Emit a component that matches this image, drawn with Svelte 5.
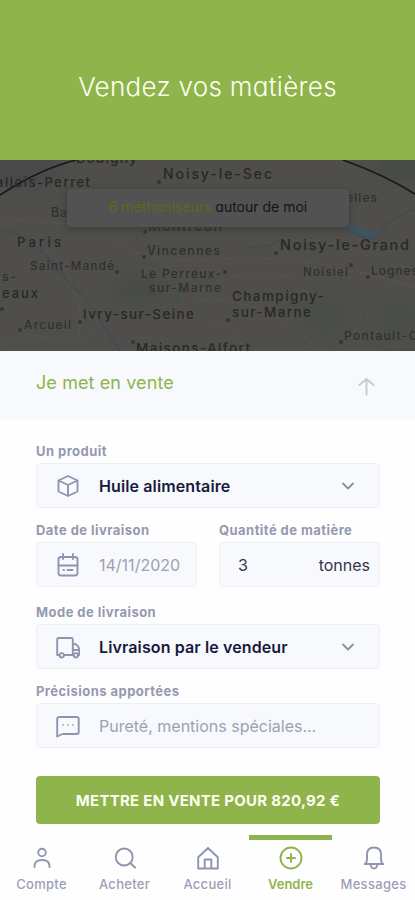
<script lang="ts">
  type Place = { name: string; x: number; y: number; width: number; size: number; strong?: boolean }

  const places: Place[] = [
    { name: 'Bobigny', x: 76, y: 163, width: 61, size: 14, strong: true },
    { name: 'allois-Perret', x: -4, y: 187, width: 94, size: 13, strong: true },
    { name: 'Noisy-le-Sec', x: 163, y: 179, width: 109, size: 14, strong: true },
    { name: 'Ba', x: 51, y: 217, width: 16, size: 12.5 },
    { name: 'elles', x: 346, y: 202, width: 31, size: 12 },
    { name: 'Montreuil', x: 148, y: 231, width: 74, size: 14, strong: true },
    { name: 'Paris', x: 17, y: 247, width: 44, size: 13, strong: true },
    { name: 'Vincennes', x: 147, y: 255, width: 73, size: 12.5 },
    { name: 'Noisy-le-Grand', x: 280, y: 250, width: 129, size: 14.5, strong: true },
    { name: 'Saint-Mandé', x: 30, y: 270, width: 84, size: 11.5 },
    { name: 'Le Perreux-', x: 141, y: 278, width: 80, size: 12 },
    { name: 'sur-Marne', x: 149, y: 292, width: 72, size: 12 },
    { name: 'Noisiel', x: 303, y: 276, width: 45, size: 11.5 },
    { name: 'Lognes', x: 371, y: 275, width: 47, size: 12 },
    { name: 's-', x: 2, y: 281, width: 14, size: 12.5 },
    { name: 'eaux', x: 2, y: 298, width: 36, size: 13, strong: true },
    { name: 'Champigny-', x: 232, y: 301, width: 92, size: 13.5, strong: true },
    { name: 'sur-Marne', x: 232, y: 317, width: 79, size: 13.5, strong: true },
    { name: 'Ivry-sur-Seine', x: 83, y: 319, width: 111, size: 13.5, strong: true },
    { name: 'Arcueil', x: 24, y: 329, width: 47, size: 12 },
    { name: 'Maisons-Alfort', x: 136, y: 353, width: 114, size: 13.5, strong: true },
    { name: 'Pontault-Co', x: 344, y: 340, width: 82, size: 12 },
  ]

  const towns = [
    [159, 182], [145, 232], [144, 257], [276, 253], [117, 272], [225, 272],
    [351, 265], [368, 277], [2, 309], [80, 322], [20, 330], [228, 320], [133, 342], [341, 342],
  ]

  const tabs = [
    { id: 'account', label: 'Compte' },
    { id: 'search', label: 'Acheter' },
    { id: 'home', label: 'Accueil' },
    { id: 'sell', label: 'Vendre' },
    { id: 'messages', label: 'Messages' },
  ]

  let active = $state('sell')
</script>

{#snippet chevron()}
  <svg class="chevron" viewBox="0 0 14 14"><path d="m2 4.500 5 5 5-5" /></svg>
{/snippet}

<div class="screen">
  <header>
    <h1>Vendez vos matières</h1>
  </header>

  <section class="map">
    <svg class="map-canvas" viewBox="0 160 415 191">
      <defs>
        <filter id="soft" x="-20%" y="-20%" width="140%" height="140%">
          <feGaussianBlur stdDeviation="7" />
        </filter>
      </defs>
      <rect y="160" width="415" height="191" fill="#4f4e4b" />
      <g filter="url(#soft)">
        <ellipse cx="138" cy="290" rx="28" ry="13" fill="#464b45" />
        <ellipse cx="400" cy="168" rx="26" ry="14" fill="#444b45" />
        <ellipse cx="325" cy="317" rx="25" ry="16" fill="#484d46" />
        <ellipse cx="398" cy="320" rx="20" ry="18" fill="#484d46" />
        <ellipse cx="25" cy="172" rx="40" ry="16" fill="#494a49" />
      </g>
      <g class="roads">
        <path d="M68 160q10 17 23 24M0 218q60 8 118 5M0 345q30-15 55-6t52-17M100 232q40 35 118 27t197 29M195 300q70-5 118 45M270 225q13 18 30 15t67 15" />
        <path d="M230 276q40 4 80-4t105 14M210 322q27-2 33 29M45 250q18 10 29 38t3 63" />
      </g>
      <g class="rivers">
        <path d="M0 228q30 9 45 27t31 34 20 23q10 20 24 39" />
        <path d="M180 302q-8-8 1-14M250 247q23 0 29-7M347 228q10 10 29 9 15-22 39-27" />
      </g>
      <path d="m348 224 28 8 1 6q-18-2-29-9z" fill="#3d555f" />
      <path class="radius" d="M0 195Q40 169 76 160M343 160q40 14 72 34" />
      {#each towns as [x, y]}
        <circle cx={x} cy={y} r="2" fill="#343432" />
      {/each}
      {#each places as place}
        <text
          class:strong={place.strong}
          x={place.x}
          y={place.y}
          font-size={place.size}
          textLength={place.width}>{place.name}</text
        >
      {/each}
    </svg>
    <p class="nearby"><span>6 méthaniseurs</span> autour de moi</p>
  </section>

  <section class="sheet-title">
    <h2>Je met en vente</h2>
    <svg class="up" viewBox="0 0 18 20"><path d="M9 18.500V2M1.500 8.500 9 2l7.500 6.500" /></svg>
  </section>

  <form>
    <div class="group">
      <span class="label">Un produit</span>
      <div class="field">
        <svg class="icon" viewBox="0 0 24 24">
          <path d="m12 2 9.500 4.500v11L12 22l-9.500-4.500v-11zM2.500 6.500 12 11l9.500-4.500M12 11v11" />
        </svg>
        <span class="value">Huile alimentaire</span>
        {@render chevron()}
      </div>
    </div>

    <div class="row">
      <div class="group">
        <span class="label">Date de livraison</span>
        <div class="field">
          <svg class="icon" viewBox="0 0 24 24">
            <rect x="2.500" y="4" width="19" height="18.500" rx="2.500" />
            <path d="M2.500 12.500h19M7 1v5M17 1v5M7.500 17h.5M11.500 17h5" />
          </svg>
          <span class="muted">14/11/2020</span>
        </div>
      </div>
      <div class="group">
        <span class="label">Quantité de matière</span>
        <div class="field amount">
          <span>3</span>
          <span>tonnes</span>
        </div>
      </div>
    </div>

    <div class="group">
      <span class="label">Mode de livraison</span>
      <div class="field">
        <svg class="icon" viewBox="0 0 24 24">
          <path d="M3.500 20H1.200V4.500q0-1.500 1.500-1.500h12.600q1.500 0 1.500 1.500V20H8M16.800 9h2.400q4 2 4 6v5h-1.500" />
          <path d="M16.800 15h6M17 20h1" />
          <circle cx="5.700" cy="20.300" r="2.200" />
          <circle cx="19.800" cy="20.300" r="2.200" />
        </svg>
        <span class="value">Livraison par le vendeur</span>
        {@render chevron()}
      </div>
    </div>

    <div class="group">
      <span class="label">Précisions apportées</span>
      <div class="field">
        <svg class="icon" viewBox="0 0 24 24">
          <path d="M1.200 22.500V5q0-2 2-2h17.500q2 0 2 2v13q0 2-2 2H6.500z" />
          <path class="dots" d="M7 11h.2M11.900 11h.2M16.800 11h.2" />
        </svg>
        <span class="muted">Pureté, mentions spéciales...</span>
      </div>
    </div>

    <button type="button" class="submit">METTRE EN VENTE POUR 820,92 €</button>
  </form>

  <nav>
    {#each tabs as tab}
      <button type="button" class="tab" class:active={active === tab.id} onclick={() => (active = tab.id)}>
        <svg viewBox="0 0 24 24">
          {#if tab.id === 'account'}
            <circle cx="12" cy="6.500" r="3.800" />
            <path d="M4.500 21v-1q0-6 7.500-6t7.500 6v1" />
          {:else if tab.id === 'search'}
            <circle cx="11.200" cy="11" r="8.500" />
            <path d="m17.300 17 4.700 4.500" />
          {:else if tab.id === 'home'}
            <path d="M2.200 22.500V11.200L12 2l9.800 9.200v11.300zM8.700 22.500v-9h6.600v9" />
          {:else if tab.id === 'sell'}
            <circle cx="12" cy="12" r="10.500" />
            <path d="M12 8v8M8 12h8" />
          {:else}
            <path d="M2.700 18q2.300-1 2.300-5V8.500q0-7 7-7t7 7V13q0 4 2.300 5zM8.500 18q.5 4.500 3.500 4.500t3.500-4.500" />
          {/if}
        </svg>
        <span>{tab.label}</span>
      </button>
    {/each}
  </nav>
</div>

<style>
  :global(body) {
    margin: 0;
    background: #fff;
  }

  .screen {
    display: flex;
    flex-direction: column;
    width: 415px;
    height: 900px;
    overflow: hidden;
    font-family: Inter, 'Liberation Sans', sans-serif;
    color: #171a3c;
    background: #fefeff;
  }

  h1,
  h2,
  p {
    margin: 0;
    font-weight: 400;
    /* single-storey a */
    font-feature-settings: 'cv11';
  }

  header {
    display: flex;
    flex: none;
    align-items: center;
    justify-content: center;
    box-sizing: border-box;
    height: 160px;
    padding-top: 13px;
    background: #8fb44b;
  }

  h1 {
    font-size: 26px;
    font-weight: 300;
    line-height: 34px;
    letter-spacing: 0.3px;
    color: #fbfff0;
    white-space: nowrap;
  }

  .map {
    position: relative;
    flex: none;
    height: 191px;
  }

  .map-canvas {
    display: block;
    width: 415px;
    height: 191px;
  }

  .map-canvas text {
    font-weight: 500;
    fill: #30302e;
  }

  .map-canvas .strong {
    fill: #282826;
  }

  .roads,
  .rivers,
  .radius {
    fill: none;
    stroke: #575350;
    stroke-width: 1;
  }

  .rivers {
    stroke: #414d53;
    stroke-width: 2;
  }

  .radius {
    stroke: #171717;
    stroke-width: 1.5;
  }

  .nearby {
    position: absolute;
    top: 29px;
    left: 67px;
    width: 282px;
    height: 38px;
    font-size: 14px;
    line-height: 36px;
    text-align: center;
    white-space: nowrap;
    color: #151515;
    background: #525252;
    border-radius: 4px;
    box-shadow: 0 2px 7px #3a3a3a;
  }

  .nearby span {
    color: #606720;
  }

  .sheet-title {
    display: flex;
    flex: none;
    align-items: center;
    justify-content: space-between;
    box-sizing: border-box;
    height: 69px;
    padding: 0 40px 5px 36px;
    background: #f7f9fd;
  }

  h2 {
    font-size: 18px;
    line-height: 22px;
    letter-spacing: 0.1px;
    color: #8fb44b;
  }

  svg {
    fill: none;
    stroke: #8f94b1;
    stroke-width: 1.9;
    stroke-linecap: round;
    stroke-linejoin: round;
  }

  .map-canvas,
  .map-canvas text,
  .map-canvas circle {
    stroke: none;
  }

  .up {
    width: 17px;
    height: 19px;
    margin-top: 6px;
    stroke: #c4c9d3;
    stroke-width: 2;
  }

  form {
    display: flex;
    flex: none;
    flex-direction: column;
    gap: 13px;
    padding: 21px 35px 0 36px;
  }

  .group {
    display: flex;
    flex-direction: column;
    height: 66px;
  }

  .group:nth-child(3) {
    margin-top: 3px;
  }

  .row {
    display: grid;
    grid-template-columns: 161px 161px;
    justify-content: space-between;
  }

  .label {
    flex: none;
    height: 22px;
    font-size: 13px;
    font-weight: 700;
    line-height: 20px;
    letter-spacing: 0.45px;
    color: #9599b0;
    white-space: nowrap;
  }

  .field {
    display: flex;
    flex: none;
    align-items: center;
    box-sizing: border-box;
    height: 45px;
    padding: 0 24px 0 19px;
    font-size: 16px;
    background: #f7f9fd;
    border: 1px solid #ecf0f6;
    border-radius: 4px;
    white-space: nowrap;
  }

  .icon {
    flex: none;
    width: 24px;
    height: 24px;
    margin-right: 19px;
  }

  .dots {
    stroke-width: 1.6;
  }

  .value {
    font-weight: 600;
    letter-spacing: 0.12px;
  }

  .muted {
    color: #9da1b3;
  }

  .chevron {
    width: 14px;
    height: 14px;
    margin-left: auto;
    stroke: #8b8f9f;
    stroke-width: 1.8;
  }

  .amount {
    justify-content: space-between;
    padding: 0 9px 0 18px;
    color: #34364b;
  }

  button {
    padding: 0;
    font-family: inherit;
    border: 0;
  }

  .submit {
    height: 48px;
    margin-top: 16px;
    font-size: 15px;
    font-weight: 700;
    letter-spacing: 0.27px;
    color: #fbfff2;
    background: #8fb44b;
    border-radius: 4px;
  }

  nav {
    display: grid;
    flex: none;
    grid-template-columns: repeat(5, 1fr);
    height: 65px;
    margin-top: 11px;
  }

  .tab {
    display: flex;
    flex-direction: column;
    align-items: center;
    font-size: 13px;
    font-weight: 500;
    letter-spacing: 0.3px;
    color: #9da0b5;
    background: none;
    border-top: 5px solid transparent;
  }

  .tab svg {
    width: 24px;
    height: 24px;
    margin: 6px 0;
  }

  .tab.active {
    font-weight: 600;
    letter-spacing: 0;
    color: #8fb44b;
    border-color: #8fb44b;
  }

  .tab.active svg {
    stroke: #8fb44b;
  }
</style>
